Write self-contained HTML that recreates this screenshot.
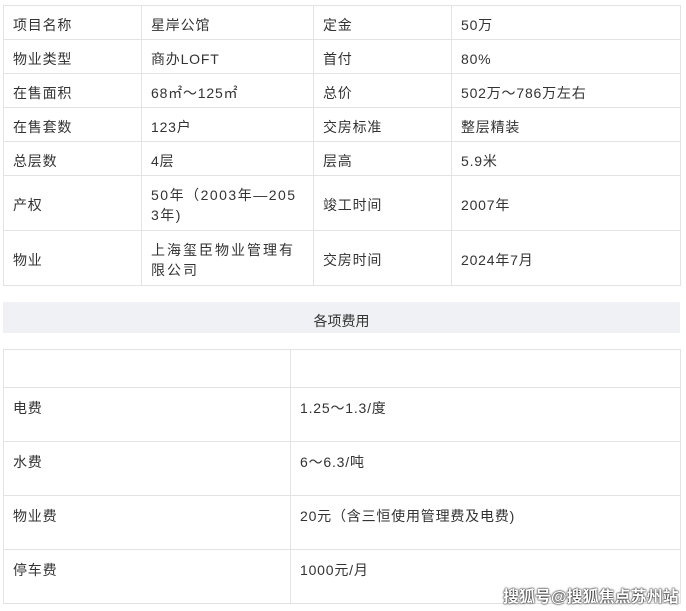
<!DOCTYPE html>
<html><head><meta charset="utf-8"><style>
body{margin:0;background:#fff;width:686px;height:611px;overflow:hidden;position:relative;font-family:"Liberation Sans","Noto Sans CJK SC",sans-serif;font-size:14px;color:#333;}
table{position:absolute;border-collapse:collapse;table-layout:fixed;}
td{border:1px solid #e3e3e3;padding:4px 0 0 9px;vertical-align:middle;line-height:20px;letter-spacing:0.8px;overflow:hidden}
#t1{left:3px;top:5px;width:677px}
#t2{left:3px;top:349px;width:677px}
#t2 td{vertical-align:top;padding-top:10px}
.band{position:absolute;left:3px;top:302px;width:677px;height:31px;background:#f0f1f4;text-align:center;line-height:38px;}
.wm{position:absolute;left:503px;top:583px;font-size:16px;font-weight:bold;color:#fff;text-shadow:0 0 2px #000,0 0 1px #000;letter-spacing:0}
</style></head><body>
<table id="t1">
<colgroup><col style="width:138px"><col style="width:172px"><col style="width:138px"><col style="width:229px"></colgroup>
<tr style="height:34px"><td>项目名称</td><td>星岸公馆</td><td>定金</td><td>50万</td></tr>
<tr style="height:34px"><td>物业类型</td><td>商办LOFT</td><td>首付</td><td>80%</td></tr>
<tr style="height:34px"><td>在售面积</td><td>68㎡～125㎡</td><td>总价</td><td>502万～786万左右</td></tr>
<tr style="height:34px"><td>在售套数</td><td>123户</td><td>交房标准</td><td>整层精装</td></tr>
<tr style="height:34px"><td>总层数</td><td>4层</td><td>层高</td><td>5.9米</td></tr>
<tr style="height:55px"><td>产权</td><td style="letter-spacing:1.5px">50年（2003年—205<br>3年)</td><td>竣工时间</td><td>2007年</td></tr>
<tr style="height:55px"><td>物业</td><td style="letter-spacing:2px">上海玺臣物业管理有<br>限公司</td><td>交房时间</td><td>2024年7月</td></tr>
</table>
<div class="band">各项费用</div>
<table id="t2">
<colgroup><col style="width:287px"><col style="width:390px"></colgroup>
<tr style="height:38px"><td></td><td></td></tr>
<tr style="height:54px"><td>电费</td><td>1.25～1.3/度</td></tr>
<tr style="height:54px"><td>水费</td><td>6～6.3/吨</td></tr>
<tr style="height:54px"><td>物业费</td><td>20元（含三恒使用管理费及电费)</td></tr>
<tr style="height:54px"><td>停车费</td><td>1000元/月</td></tr>
</table>
<div class="wm">搜狐号@搜狐焦点苏州站</div>
</body></html>
